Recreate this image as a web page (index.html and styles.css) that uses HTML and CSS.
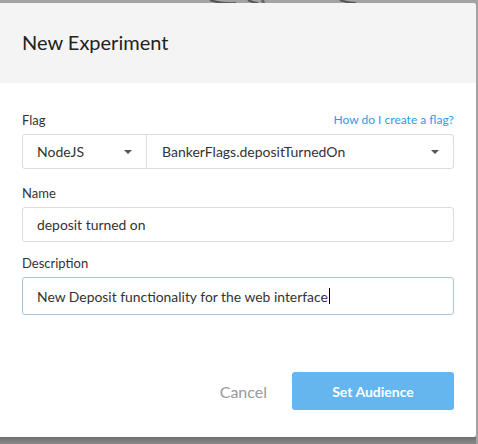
FILE: index.html
```html
<!DOCTYPE html>
<html>
<head>
<meta charset="utf-8">
<link rel="stylesheet" href="styles.css">
</head>
<body>
<svg class="backdrop-art" width="478" height="10" viewBox="0 0 478 10">
  <path d="M210 0 Q222 4 236 3" stroke="#555" stroke-width="2" fill="none"/>
  <path d="M248 0 Q254 3 258 3" stroke="#555" stroke-width="2" fill="none"/>
  <path d="M262 0 L264 3" stroke="#666" stroke-width="3" fill="none"/>
  <path d="M340 0 Q348 3 356 3" stroke="#555" stroke-width="2" fill="none"/>
</svg>
<div class="modal">
  <div class="modal-header">
    <h1 class="modal-title">New Experiment</h1>
  </div>
  <div class="modal-body">
    <div class="label-row">
      <span class="label">Flag</span>
      <a class="help-link">How do I create a flag?</a>
    </div>
    <div class="select-group">
      <div class="select select-lang"><span>NodeJS</span><span class="caret"></span></div>
      <div class="select select-flag"><span>BankerFlags.depositTurnedOn</span><span class="caret"></span></div>
    </div>
    <div class="label-row"><span class="label">Name</span></div>
    <div class="input input-name">deposit turned on</div>
    <div class="label-row"><span class="label">Description</span></div>
    <div class="input input-focus">New Deposit functionality for the web interface<span class="cursor"></span></div>
    <div class="actions">
      <span class="cancel">Cancel</span>
      <span class="primary">Set Audience</span>
    </div>
  </div>
</div>
<div class="shade"></div>
</body>
</html>
```
FILE: styles.css
```css
html, body {
  margin: 0;
  padding: 0;
}
body {
  width: 478px;
  height: 444px;
  overflow: hidden;
  background: #a3a3a3;
  font-family: Lato, "Open Sans", sans-serif;
  position: relative;
}
.backdrop-art {
  position: absolute;
  top: 0;
  left: 0;
}
.modal {
  position: relative;
  margin: 3px 2px 0 -6px;
  width: 482px;
  background: #fff;
  border-radius: 0 3px 3px 0;
}
.modal-header {
  background: #f4f4f4;
  height: 80px;
  display: flex;
  align-items: center;
  padding-left: 28px;
  border-radius: 0 3px 0 0;
}
.modal-title {
  margin: 0;
  font-weight: 400;
  font-size: 20px;
  color: #222;
  padding-bottom: 2px;
}
.modal-body {
  padding: 26px 22px 27px 28px;
}
.label-row {
  display: flex;
  justify-content: space-between;
  align-items: flex-end;
  height: 19px;
  margin-bottom: 6px;
}
.label {
  font-size: 13px;
  color: #333;
}
.help-link {
  font-size: 12px;
  color: #2b9be8;
  padding-bottom: 1px;
}
.select-group {
  display: flex;
  height: 35px;
  border: 1px solid #dcdcdc;
  border-radius: 3px;
  box-sizing: border-box;
  margin-bottom: 13px;
}
.select {
  display: flex;
  align-items: center;
  justify-content: space-between;
  font-size: 14px;
  color: #333;
  padding: 0 14px 0 14px;
}
.select-lang {
  width: 124px;
  box-sizing: border-box;
  border-right: 1px solid #dcdcdc;
}
.select-flag {
  flex: 1;
  padding-left: 15px;
}
.caret {
  width: 0;
  height: 0;
  border-left: 4px solid transparent;
  border-right: 4px solid transparent;
  border-top: 4px solid #555;
}
.input {
  height: 35px;
  box-sizing: border-box;
  border: 1px solid #dcdcdc;
  border-radius: 3px;
  padding: 0 14px;
  display: flex;
  align-items: center;
  font-size: 13.9px;
  color: #333;
}
.input-name {
  margin-bottom: 10px;
}
.input-focus {
  height: 38px;
  border-color: #a9c3d9;
}
.cursor {
  display: inline-block;
  width: 1px;
  height: 16px;
  background: #000;
  margin-left: 1px;
}
.actions {
  display: flex;
  justify-content: flex-end;
  align-items: center;
  margin-top: 57px;
  gap: 25px;
}
.cancel {
  font-size: 16px;
  color: #9a9a9a;
}
.primary {
  width: 162px;
  height: 38px;
  background: #65b5ee;
  color: #fff;
  font-weight: 700;
  font-size: 14px;
  border-radius: 3px;
  display: flex;
  align-items: center;
  justify-content: center;
}
.shade {
  height: 8px;
  background: linear-gradient(#6f6f6f, #8e8e8e);
  margin-right: 2px;
}
```
